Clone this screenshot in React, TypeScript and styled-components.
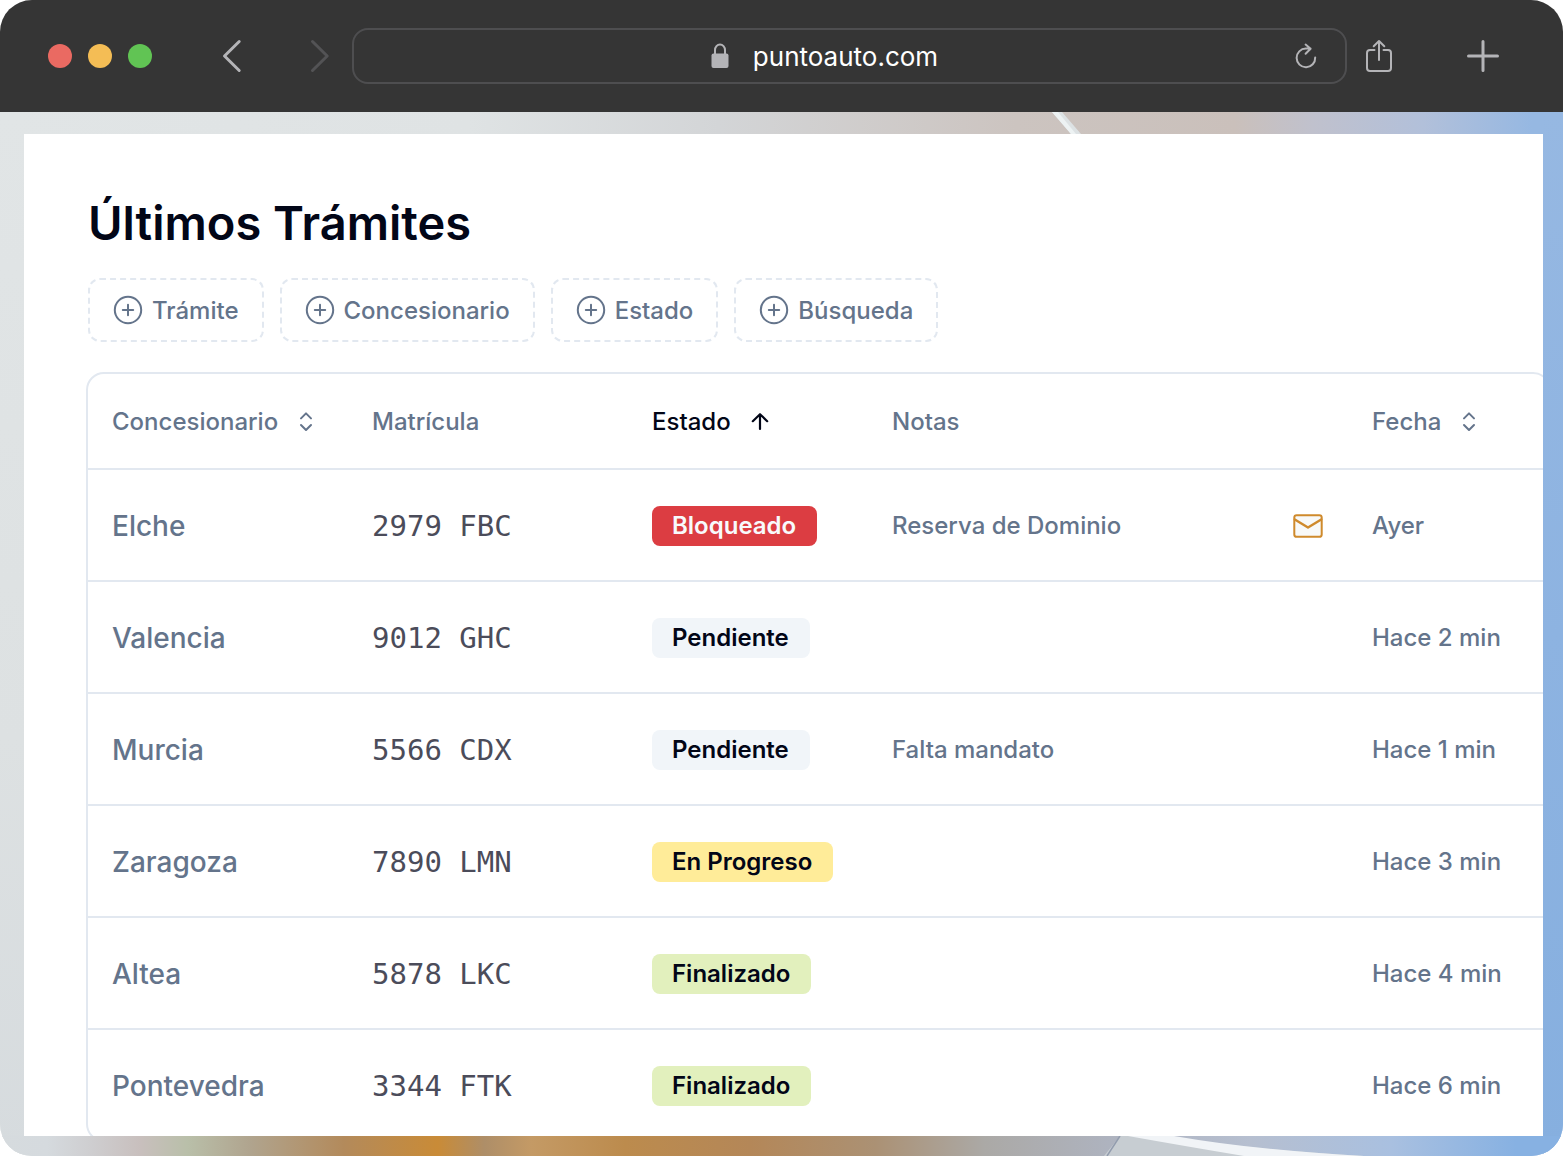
import React from "react";
import styled, { createGlobalStyle } from "styled-components";

const GlobalStyle = createGlobalStyle`
  * { box-sizing: border-box; }
  body { margin: 0; background: #fff; font-family: Inter, "Noto Sans", sans-serif; }
  button, input { font: inherit; color: inherit; background: none; border: 0; padding: 0; margin: 0; }
  button { cursor: pointer; }
`;

const Window = styled.div`
  height: 100vh;
  display: flex;
  flex-direction: column;
  border-radius: 32px;
  overflow: hidden;
`;

const Toolbar = styled.header`
  flex: none;
  height: 112px;
  padding: 0 64px 0 48px;
  display: flex;
  align-items: center;
  background: #353535;
  color: #b4b4b7;
`;

const Lights = styled.div`
  display: flex;
  gap: 16px;
`;

const Light = styled.button<{ $color: string }>`
  width: 24px;
  height: 24px;
  border-radius: 50%;
  background: ${(p) => p.$color};
`;

const History = styled.nav`
  display: flex;
  gap: 56px;
  margin: 0 16px 0 64px;
`;

const ToolButton = styled.button<{ $dim?: boolean }>`
  width: 32px;
  height: 32px;
  display: block;
  color: ${(p) => (p.$dim ? "#535355" : "#b4b4b7")};
  svg { display: block; overflow: visible; }
`;

const AddressBar = styled.div`
  flex: 1;
  height: 56px;
  padding-right: 23px;
  display: flex;
  align-items: center;
  border: 2px solid #4e4e50;
  border-radius: 16px;
`;

const Address = styled.label`
  flex: 1;
  padding-left: 5px;
  display: flex;
  align-items: center;
  justify-content: center;
  gap: 24px;
`;

const AddressInput = styled.input`
  field-sizing: content;
  padding-top: 2px;
  font-size: 26px;
  line-height: 32px;
  color: #fff;
  outline: none;
`;

const Actions = styled.div`
  display: flex;
  gap: 72px;
  margin-left: 16px;
`;

const Backdrop = styled.main`
  position: relative;
  flex: 1;
  min-height: 0;
  padding: 22px 20px 20px 24px;
  display: flex;
  background:
    linear-gradient(90deg, #d6dbde 0%, #d5dade 3%, #cecdcf 6%, #c8bfbd 9%, #b9bfa9 12%, #b0a48e 16%, #b38a5b 22%, #c98b37 28%, #ae8e68 31%, #c49a65 34%, #bc8b4d 40%, #b48758 48%, #ab9174 56%, #aba9a6 63%, #aeb3bf 71%, #b6bfd0 80%, #a9c0e0 89%, #87b1e2 97%) left bottom / 100% 20px no-repeat,
    linear-gradient(180deg, #96b8e2, #8db3e1 50%, #86afdf) right top / 20px 100% no-repeat,
    linear-gradient(180deg, #e1e5e6, #dde1e2 60%, #d6dbde) left top / 24px 100% no-repeat,
    linear-gradient(90deg, #e1e5e6 0%, #dfe3e4 30%, #d3d5d7 46%, #ccc4c0 65%, #cac0bb 79%, #c0c1cd 84%, #b2c0da 91%, #96b8e2 98%);
`;

const Streaks = styled.svg`
  position: absolute;
  display: block;
`;
const TopStreak = styled(Streaks)`
  top: 0;
  left: 67%;
`;
const BottomStreak = styled(Streaks)`
  bottom: 0;
  left: 70%;
`;

const Sheet = styled.section`
  position: relative;
  flex: 1;
  min-width: 0;
  overflow: hidden;
  padding: 56px 0 0 64px;
  background: #fff;
`;

const Title = styled.h1`
  margin: 0 0 22px;
  font-size: 47px;
  line-height: 66px;
  font-weight: 600;
  color: #020617;
`;

const Filters = styled.div`
  display: flex;
  gap: 16px;
  margin-bottom: 30px;
`;

const Filter = styled.button`
  height: 64px;
  padding: 0 23px 0 22px;
  display: flex;
  align-items: center;
  gap: 8px;
  border: 2px dashed #e2e8f0;
  border-radius: 12px;
  font-size: 24px;
  font-weight: 500;
  color: #64748b;
`;

const Panel = styled.div`
  margin: 0 -8px 0 -2px;
  border: 2px solid #e2e8f0;
  border-radius: 18px;
`;

const Table = styled.table`
  width: 100%;
  table-layout: fixed;
  border-collapse: separate;
  border-spacing: 0;
  color: #64748b;
`;

const Col = styled.col<{ $width?: number }>`
  width: ${(p) => (p.$width ? `${p.$width}px` : "auto")};
`;

const Head = styled.th`
  height: 96px;
  padding: 0 24px;
  border-bottom: 2px solid #e2e8f0;
  text-align: left;
  font-size: 24px;
  font-weight: 500;
`;

const Sort = styled.button<{ $active?: boolean }>`
  display: flex;
  align-items: center;
  gap: 12px;
  color: ${(p) => (p.$active ? "#020617" : "inherit")};
`;

const Cell = styled.td`
  height: 112px;
  padding: 2px 24px 0;
  border-bottom: 2px solid #e2e8f0;
  font-size: 24px;
  line-height: 28px;
  font-weight: 500;
  white-space: nowrap;
  tr:last-child > & { border-bottom: 0; height: 110px; }
`;

const Dealer = styled(Cell)`
  font-size: 28px;
  line-height: 34px;
`;

const Plate = styled(Cell)`
  font-family: "DejaVu Sans Mono", monospace;
  font-size: 29px;
  line-height: 34px;
  font-weight: 400;
  color: #4b4c5a;
`;

const Note = styled.div`
  display: flex;
  align-items: center;
  justify-content: space-between;
`;

const Badge = styled.span<{ $bg: string; $fg: string }>`
  display: block;
  width: fit-content;
  padding: 0 21px 0 20px;
  border-radius: 8px;
  line-height: 40px;
  font-weight: 600;
  background: ${(p) => p.$bg};
  color: ${(p) => p.$fg};
`;

const tones = {
  Bloqueado: { bg: "#dc3d42", fg: "#f8fafc" },
  Pendiente: { bg: "#f1f5f9", fg: "#020617" },
  "En Progreso": { bg: "#ffec99", fg: "#020617" },
  Finalizado: { bg: "#e2f0bd", fg: "#020617" },
};

type Row = { dealer: string; plate: string; state: keyof typeof tones; note?: string; mail?: boolean; date: string };

const rows: Row[] = [
  { dealer: "Elche", plate: "2979 FBC", state: "Bloqueado", note: "Reserva de Dominio", mail: true, date: "Ayer" },
  { dealer: "Valencia", plate: "9012 GHC", state: "Pendiente", date: "Hace 2 min" },
  { dealer: "Murcia", plate: "5566 CDX", state: "Pendiente", note: "Falta mandato", date: "Hace 1 min" },
  { dealer: "Zaragoza", plate: "7890 LMN", state: "En Progreso", date: "Hace 3 min" },
  { dealer: "Altea", plate: "5878 LKC", state: "Finalizado", date: "Hace 4 min" },
  { dealer: "Pontevedra", plate: "3344 FTK", state: "Finalizado", date: "Hace 6 min" },
];

const stroke = { fill: "none", stroke: "currentColor", strokeLinecap: "round", strokeLinejoin: "round" } as const;
const icon = { ...stroke, width: 32, height: 32, viewBox: "0 0 32 32", "aria-hidden": true } as const;

const PlusCircleIcon = () => (
  <svg {...icon} strokeWidth="2"><circle cx="16" cy="16" r="13.2" /><path d="M16 10.8v10.4M10.8 16h10.4" /></svg>
);
const SortIcon = () => (
  <svg {...icon} strokeWidth="2"><path d="m11 13.4 5-5 5 5M11 20l5 5 5-5" /></svg>
);
const ArrowUpIcon = () => (
  <svg {...icon} strokeWidth="2.2"><path d="M17 24V9.4M9.8 16.2 17 9.2l7.2 7" /></svg>
);
const MailIcon = () => (
  <svg {...icon} stroke="#cf8a2c" strokeWidth="2">
    <rect x="2.3" y="5.2" width="27.4" height="21.6" rx="2.4" fill="#f8f9f8" />
    <path d="M2.8 9.4 16 17.6l13.2-8.2" strokeWidth="2.4" />
  </svg>
);

export default function App() {
  return (
    <Window>
      <GlobalStyle />
      <Toolbar>
        <Lights>
          <Light $color="#ea6a62" aria-label="Cerrar" />
          <Light $color="#f4bd55" aria-label="Minimizar" />
          <Light $color="#61c454" aria-label="Maximizar" />
        </Lights>
        <History>
          <ToolButton aria-label="Atrás">
            <svg {...icon} strokeWidth="3"><path d="M23.2 1.5 8.5 16l14.7 14.5" /></svg>
          </ToolButton>
          <ToolButton $dim aria-label="Adelante">
            <svg {...icon} strokeWidth="3"><path d="M8.5 1.5 23.2 16 8.5 30.5" /></svg>
          </ToolButton>
        </History>
        <AddressBar>
          <Address>
            <svg width="18" height="26" viewBox="0 0 18 26" aria-hidden="true">
              <path d="M4 12V7a5 5.5 0 0 1 10 0v5" fill="none" stroke="#b4b4b7" strokeWidth="2" />
              <rect x="0.5" y="10.5" width="17" height="14.5" rx="2" fill="#b4b4b7" />
            </svg>
            <AddressInput aria-label="Dirección" defaultValue="puntoauto.com" />
          </Address>
          <ToolButton aria-label="Recargar">
            <svg {...icon} strokeWidth="2">
              <path d="M25.2 17.5A9.3 9.3 0 1 1 15.9 8.6h4.6M15.6 4.6l5 4.2-5 5" />
            </svg>
          </ToolButton>
        </AddressBar>
        <Actions>
          <ToolButton aria-label="Compartir">
            <svg {...icon} strokeWidth="2">
              <path d="M11.5 10H7a3 3 0 0 0-3 3v15a3 3 0 0 0 3 3h18a3 3 0 0 0 3-3V13a3 3 0 0 0-3-3h-4.5M16 20V1.5M10.7 6.3 16 1l5.3 5.3" />
            </svg>
          </ToolButton>
          <ToolButton aria-label="Nueva pestaña">
            <svg {...icon} strokeWidth="3"><path d="M16 1.5v29M1.5 16h29" /></svg>
          </ToolButton>
        </Actions>
      </Toolbar>
      <Backdrop>
        <TopStreak width="60" height="22" viewBox="0 0 60 22" aria-hidden="true">
          <path d="M5 0h10l19 22H24z" fill="#dde2e4" />
          <path d="M5 0h6l18 22h-5z" fill="#edf2f3" />
        </TopStreak>
        <BottomStreak width="280" height="20" viewBox="0 0 280 20" aria-hidden="true">
          <path d="M26 0H70Q160 14 270 20H10z" fill="#c7cdd2" />
          <path d="M34 0H80Q160 14 270 20H150Q90 10 34 0z" fill="#f1f4f7" />
          <path d="M26 0 13 20" stroke="#929cae" strokeWidth="1.5" />
        </BottomStreak>
        <Sheet>
          <Title>Últimos Trámites</Title>
          <Filters>
            {["Trámite", "Concesionario", "Estado", "Búsqueda"].map((name) => (
              <Filter key={name}>
                <PlusCircleIcon />
                {name}
              </Filter>
            ))}
          </Filters>
          <Panel>
            <Table>
              <colgroup>
                <Col $width={260} />
                <Col $width={280} />
                <Col $width={240} />
                <Col $width={480} />
                <Col />
              </colgroup>
              <thead>
                <tr>
                  <Head><Sort>Concesionario<SortIcon /></Sort></Head>
                  <Head>Matrícula</Head>
                  <Head aria-sort="ascending"><Sort $active>Estado<ArrowUpIcon /></Sort></Head>
                  <Head>Notas</Head>
                  <Head><Sort>Fecha<SortIcon /></Sort></Head>
                </tr>
              </thead>
              <tbody>
                {rows.map((row) => (
                  <tr key={row.plate}>
                    <Dealer>{row.dealer}</Dealer>
                    <Plate>{row.plate}</Plate>
                    <Cell><Badge $bg={tones[row.state].bg} $fg={tones[row.state].fg}>{row.state}</Badge></Cell>
                    <Cell>
                      <Note>
                        {row.note}
                        {row.mail && <MailIcon />}
                      </Note>
                    </Cell>
                    <Cell>{row.date}</Cell>
                  </tr>
                ))}
              </tbody>
            </Table>
          </Panel>
        </Sheet>
      </Backdrop>
    </Window>
  );
}
